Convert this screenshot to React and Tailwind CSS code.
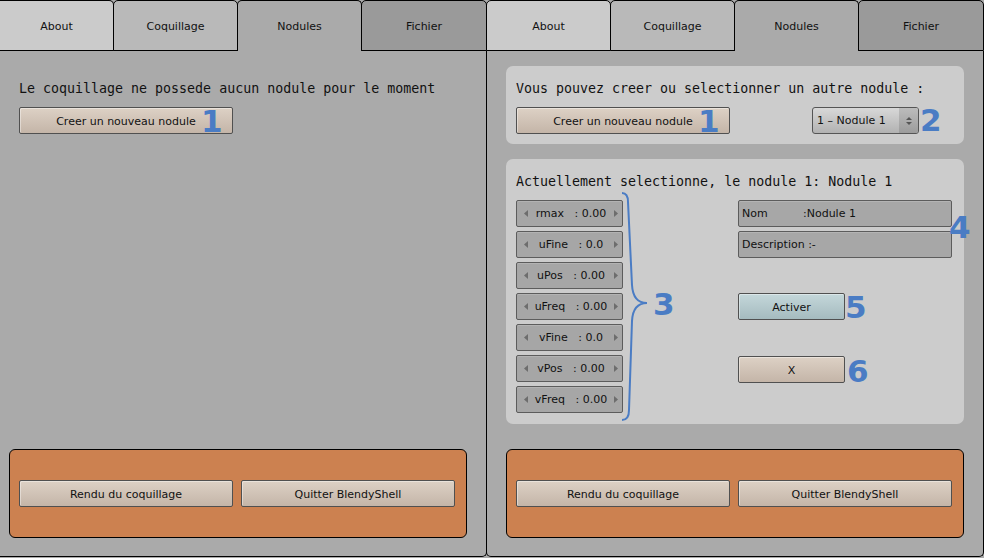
import clsx from 'clsx';

const tabTones = ['bg-[#cbcbcb]', 'bg-[#b9b9b9]', 'bg-[#aaaaaa]', 'bg-[#9a9a9a]'];
const tabLabels = ['About', 'Coquillage', 'Nodules', 'Fichier'];

const Num = ({ children, className }) => (
    <span className={clsx("absolute font-['DejaVu_Sans',sans-serif] text-[31px] font-bold leading-none text-[#4a7cc4]", className)}>
        {children}
    </span>
);

const Btn = ({ children, tone = 'beige', className }) => (
    <div
        className={clsx(
            'flex h-[27px] items-center justify-center rounded-[2px] border border-[#505050] pt-[3px] shadow-[inset_1px_1px_0_rgba(255,255,255,0.4)]',
            tone === 'beige' ? 'bg-linear-to-b from-[#ddd1c5] to-[#c4b5a8]' : 'bg-linear-to-b from-[#c4d7da] to-[#a5bbbf]',
            className
        )}
    >
        {children}
    </div>
);

const Tri = ({ right }) => (
    <svg width="4" height="7" viewBox="0 0 4 7" className="shrink-0">
        <polygon points={right ? '0,0 4,3.5 0,7' : '4,0 0,3.5 4,7'} fill="#6d6d6d" />
    </svg>
);

const NumField = ({ label, value }) => (
    <div className="flex h-[27px] items-center rounded-[2px] border border-[#5c5c5c] bg-[#a6a6a6] pl-[7px] pr-[4px] shadow-[inset_0_1px_0_rgba(255,255,255,0.15)]">
        <Tri />
        <span className="flex-1 pt-[2px] text-center whitespace-pre">{label}   : {value}</span>
        <Tri right />
    </div>
);

const TextField = ({ children }) => (
    <div className="flex h-[27px] items-center rounded-[2px] border border-[#5c5c5c] bg-[#a7a7a7] pl-[3px] pt-[2px] whitespace-pre shadow-[inset_0_1px_0_rgba(255,255,255,0.15)]">
        {children}
    </div>
);

const Tabs = ({ first }) => (
    <div className="flex h-[51px]">
        {tabLabels.map((label, i) => (
            <div
                key={label}
                className={clsx(
                    'flex items-center justify-center rounded-t-[5px] border-x border-t border-black pt-[3px]',
                    tabTones[i],
                    i !== 2 && 'border-b',
                    i > 0 && '-ml-px',
                    first && i === 0 && 'rounded-tl-none border-l-0',
                    i === 0 ? (first ? 'w-[114px]' : 'w-[125px]') : i === 3 ? 'w-[126px]' : 'w-[125px]'
                )}
            >
                {label}
            </div>
        ))}
    </div>
);

const CreateButton = () => (
    <div className="relative w-[214px]">
        <Btn>Creer un nouveau nodule</Btn>
        <Num className="left-[182px] top-[-1px]">1</Num>
    </div>
);

const Footer = () => (
    <div className="mb-[18px] mt-auto flex h-[89px] w-[458px] items-center gap-[8px] rounded-[6px] border border-black bg-[#cc8150] pl-[9px]">
        <Btn className="w-[214px]">Rendu du coquillage</Btn>
        <Btn className="w-[214px]">Quitter BlendyShell</Btn>
    </div>
);

const fields = [
    ['rmax', '0.00'],
    ['uFine', '0.0'],
    ['uPos', '0.00'],
    ['uFreq', '0.00'],
    ['vFine', '0.0'],
    ['vPos', '0.00'],
    ['vFreq', '0.00'],
];

const mono = "font-['DejaVu_Sans_Mono',monospace] text-[13.3px] leading-[16px]";

export default function App() {
    return (
        <div className="flex h-[558px] w-[984px] overflow-hidden bg-[#aaaaaa] font-['DejaVu_Sans',sans-serif] text-[11px] text-[#111]">
            {/* panneau gauche */}
            <div className="flex h-[557px] w-[487px] shrink-0 flex-col">
                <Tabs first />
                <div className="flex flex-1 flex-col rounded-br-[5px] border-b border-r border-black pl-[9px]">
                    <div className="mt-[15px] px-[10px] pt-[15px]">
                        <p className={mono}>Le coquillage ne possede aucun nodule pour le moment</p>
                        <div className="mt-[10px]">
                            <CreateButton />
                        </div>
                    </div>
                    <Footer />
                </div>
            </div>

            {/* panneau droit */}
            <div className="-ml-px flex h-[557px] w-[498px] shrink-0 flex-col">
                <Tabs />
                <div className="flex flex-1 flex-col rounded-b-[5px] border-x border-b border-black px-[19px]">
                    <div className="mt-[15px] rounded-[7px] bg-[#cccccc] px-[10px] pb-[10px] pt-[15px]">
                        <p className={mono}>Vous pouvez creer ou selectionner un autre nodule :</p>
                        <div className="mt-[10px] flex h-[27px] items-center">
                            <CreateButton />
                            <div className="ml-[82px] flex h-[27px] w-[107px] overflow-hidden rounded-[3px] border border-[#555] bg-linear-to-b from-[#d8d8d8] to-[#b2b2b2]">
                                <div className="flex flex-1 items-center pl-[4px] pt-[2px]">1 – Nodule 1</div>
                                <div className="flex w-[19px] flex-col items-center justify-center gap-[2px] bg-linear-to-b from-[#bcbcbc] to-[#9c9c9c]">
                                    <svg width="6" height="3" viewBox="0 0 6 3"><polygon points="0,3 3,0 6,3" fill="#555" /></svg>
                                    <svg width="6" height="3" viewBox="0 0 6 3"><polygon points="0,0 6,0 3,3" fill="#555" /></svg>
                                </div>
                            </div>
                            <span className="ml-px font-['DejaVu_Sans',sans-serif] text-[31px] font-bold leading-none text-[#4a7cc4]">2</span>
                        </div>
                    </div>

                    <div className="relative mt-[15px] rounded-[7px] bg-[#cccccc] px-[10px] pb-[11px] pt-[15px]">
                        <p className={mono}>Actuellement selectionne, le nodule 1: Nodule 1</p>
                        <div className="mt-[10px] flex">
                            <div className="flex w-[107px] flex-col gap-[4px]">
                                {fields.map(([label, value]) => (
                                    <NumField key={label} label={label} value={value} />
                                ))}
                            </div>
                            <div className="ml-[115px] flex w-[214px] flex-col">
                                <TextField>
                                    <span className="inline-block w-[61px]">Nom</span>:Nodule 1
                                </TextField>
                                <div className="mt-[4px]">
                                    <TextField>Description :-</TextField>
                                </div>
                                <Btn tone="blue" className="mt-[35px] w-[107px]">Activer</Btn>
                                <Btn className="mt-[36px] w-[107px]">X</Btn>
                            </div>
                        </div>

                        <svg width="30" height="234" viewBox="0 0 30 234" className="absolute left-[114px] top-[31px]">
                            <path
                                d="M2 3 Q8 3 8 12 L12 95 Q13 113 27 113 Q13 113 12 131 L9 220 Q9 230 2 230"
                                fill="none"
                                stroke="#4a7cc4"
                                strokeWidth="2"
                            />
                        </svg>
                        <Num className="left-[147px] top-[130px]">3</Num>
                        <Num className="left-[443px] top-[53px]">4</Num>
                        <Num className="left-[339px] top-[133px]">5</Num>
                        <Num className="left-[341px] top-[197px]">6</Num>
                    </div>
                    <Footer />
                </div>
            </div>
        </div>
    );
}
